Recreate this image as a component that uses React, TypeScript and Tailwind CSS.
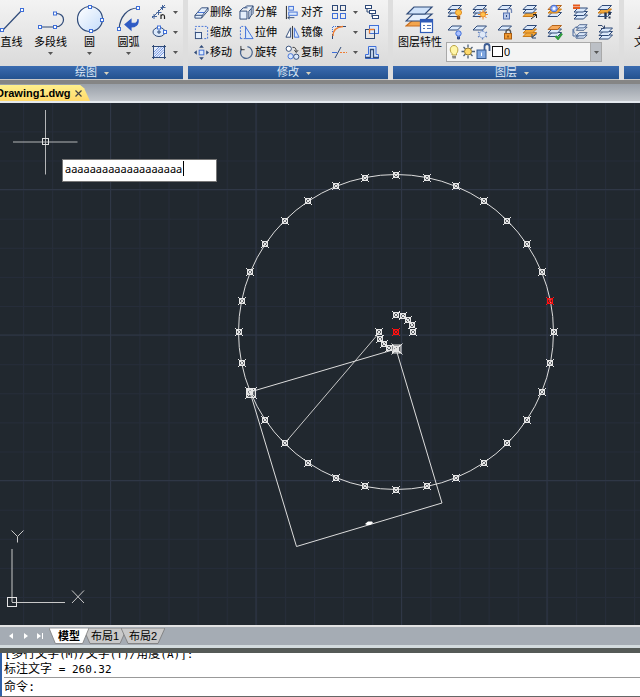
import React from 'react';

const NAVY = '#2f4a78';
const BLUE = '#3f6fd8';
const PALE = '#dbe9fb';
const ORANGE = '#f2a83a';

function Handle({ x, y }: { x: number; y: number }) {
  return <rect x={x - 1.5} y={y - 1.5} width="3" height="3" fill="#fff" stroke={BLUE} strokeWidth="1" />;
}

function Caret({ className = 'text-[#555]' }: { className?: string }) {
  return (
    <svg width="5" height="3" viewBox="0 0 5 3" className={className} aria-hidden="true">
      <path d="M0 0H5L2.5 3Z" fill="currentColor" />
    </svg>
  );
}

function Icon({ children, size = 16 }: { children: React.ReactNode; size?: number }) {
  return (
    <svg width={size} height={size} viewBox="0 0 16 16" fill="none" stroke={NAVY} strokeWidth="1" className="shrink-0" aria-hidden="true">
      {children}
    </svg>
  );
}

function Panel({ title, className, children }: { title: string; className: string; children: React.ReactNode }) {
  return (
    <section className={`flex h-[80px] shrink-0 flex-col overflow-hidden border-b border-[#c8c8c8] bg-linear-to-b from-[#f3f3f3] to-[#d6d6d6] ${className}`}>
      <div className="h-[66px]">{children}</div>
      <button className="flex h-[13px] w-full items-center justify-center bg-linear-to-b from-[#3a6bb0] to-[#23528f] text-[11px] leading-[13px] text-[#dfe9f6]">
        <span className="relative">
          {title}
          {title && (
            <svg width="5" height="3" viewBox="0 0 5 3" className="absolute top-[6px] left-[29px]" aria-hidden="true">
              <path d="M0 0H5L2.5 3Z" fill="#d8d2bc" />
            </svg>
          )}
        </span>
      </button>
    </section>
  );
}

function BigTool({ label, icon, menu, className }: { label: string; icon: React.ReactNode; menu?: boolean; className: string }) {
  return (
    <button className={`flex flex-col items-center pt-1 ${className}`}>
      <svg width="30" height="30" viewBox="0 0 30 30" fill="none" stroke={NAVY} strokeWidth="1.2" aria-hidden="true">
        {icon}
      </svg>
      <span className="text-[11px] leading-4 whitespace-nowrap">{label}</span>
      {menu && <span className="flex h-[7px] items-center"><Caret /></span>}
    </button>
  );
}

function Tool({ label, children }: { label: string; children: React.ReactNode }) {
  return (
    <button className="flex h-5 items-center gap-px">
      <Icon size={15}>{children}</Icon>
      <span className="text-[11px] leading-4 whitespace-nowrap">{label}</span>
    </button>
  );
}

function MenuTool({ label, children }: { label: string; children: React.ReactNode }) {
  return (
    <button aria-label={label} className="flex h-5 items-center gap-[6px]">
      <Icon>{children}</Icon>
      <Caret />
    </button>
  );
}

function Sheet({ y, fill = PALE, stroke = NAVY }: { y: number; fill?: string; stroke?: string }) {
  return <polygon points={`5,${y} 14.5,${y} 10.5,${y + 4} 1,${y + 4}`} fill={fill} stroke={stroke} />;
}

function Stack({ top = PALE, mid = PALE, low = PALE }: { top?: string; mid?: string; low?: string }) {
  return (
    <>
      <Sheet y={8.5} fill={low} stroke={low === ORANGE ? '#c87a18' : NAVY} />
      <Sheet y={5} fill={mid} stroke={mid === ORANGE ? '#c87a18' : NAVY} />
      <Sheet y={1.5} fill={top} stroke={top === PALE ? NAVY : '#b5651d'} />
    </>
  );
}

const layerTools: { label: string; art: React.ReactNode }[] = [
  {
    label: '关闭其他图层',
    art: <><Stack /><circle cx="11.5" cy="8.5" r="3" fill="#ffc247" stroke="#e38a1d" /><path d="M10.3 12v3h2.4v-3" fill="#b06a20" stroke="#8a4c12" /></>,
  },
  {
    label: '冻结其他图层',
    art: <><Stack /><path d="M11 5.5v10M6 10.5h10M7.5 7l7 7M14.5 7l-7 7" stroke="#ee8a2a" /><circle cx="11" cy="10.5" r="2.5" fill="#ffc34d" stroke="#ee8a2a" /></>,
  },
  {
    label: '解锁图层',
    art: <><Sheet y={1.5} /><rect x="6.5" y="9" width="6" height="6" fill="#b9c9ea" stroke="#5370b0" /><path d="M10.5 9V6.5a2 2 0 0 1 4 0V9" stroke="#7186b4" strokeWidth="1.3" /><path d="M9.5 11v2" /></>,
  },
  {
    label: '置为当前',
    art: <><Stack low={ORANGE} /><path d="M9 15l5-4M11 10.5h3.5V14" stroke="#222" /></>,
  },
  {
    label: '匹配图层',
    art: <><Stack mid={ORANGE} top="#f3c69c" /><circle cx="7" cy="4.5" r="3.3" fill="#9cb6ff" stroke={BLUE} /><circle cx="7" cy="4.5" r="1" fill="#fff" stroke="#fff" /></>,
  },
  {
    label: '上一个图层',
    art: <><g transform="translate(1 2)"><Sheet y={9} /><Sheet y={5.5} /><Sheet y={2} /></g><path d="M1 1.5h7M1 4h7" stroke="#e5591c" strokeWidth="1.8" /></>,
  },
  {
    label: '图层漫游',
    art: <><Stack mid={ORANGE} /><path d="M8.5 8.5v3.5M12.5 7.5v3.5" stroke="#26344f" strokeWidth="2.4" /><path d="M8.5 13v2M12.5 12.5v2" stroke="#26344f" strokeWidth="2" /></>,
  },
  {
    label: '关闭图层',
    art: <><Sheet y={2} /><circle cx="11.5" cy="9.5" r="2.7" fill="#a8bfff" stroke={BLUE} /><path d="M10.5 12.5v2.5h2v-2.5" fill="#3b5cab" stroke="#2e488a" /></>,
  },
  {
    label: '冻结图层',
    art: <><Sheet y={2} /><path d="M10.5 5.5v10M6 8l9 5M15 8l-9 5" stroke="#5c7dbb" strokeWidth="1.3" /><circle cx="10.5" cy="10.5" r="3.3" stroke="#7d98cb" strokeDasharray="2 1" fill="#dfe9f8" /></>,
  },
  {
    label: '锁定图层',
    art: <><Sheet y={2} /><path d="M9 10V8a2.3 2.3 0 0 1 4.6 0v2" stroke="#555" strokeWidth="1.4" /><rect x="7.5" y="9.5" width="7" height="5.5" fill="#f29a31" stroke="#a85d12" /><path d="M11 11.5v2" stroke="#5c2e06" /></>,
  },
  {
    label: '更改为当前图层',
    art: <><Stack low={ORANGE} mid={ORANGE} /><path d="M15 9.5l-5 4M10 10v4h4" stroke="#26446e" /></>,
  },
  {
    label: '图层状态',
    art: <><Stack top="#f5a95b" /><path d="M8.5 12l2.5 2.8L15 9.5" stroke="#2e9a3c" strokeWidth="2.2" /></>,
  },
  {
    label: '隔离图层',
    art: <><g transform="translate(3.5 -.5) scale(.8)"><Sheet y={4.5} /><Sheet y={1.5} /></g><g transform="translate(3.5 7) scale(.8)"><Sheet y={5} /><Sheet y={2} /></g><path d="M5 3C1 3 1 8 3 9.5M1 5v7h4M3.5 10.5l2 1.500-2 1.500" stroke="#48689c" /></>,
  },
  {
    label: '合并图层',
    art: <><g transform="translate(1 2)"><Sheet y={9} /><Sheet y={5.5} /><Sheet y={2} /></g><path d="M1 1.5h4l2 2.500M4 4.500h3.500V1.500" stroke="#34496f" /></>,
  },
];

function DrawPanel() {
  return (
    <Panel title="绘图" className="-ml-[11px] w-[194px]">
      <div className="flex pl-[3px]">
        <BigTool label="直线" className="w-[39px]" icon={<><path d="M5 27L25 6" /><Handle x={5} y={26} /><Handle x={25} y={6} /></>} />
        <BigTool label="多段线" menu className="w-[39px]" icon={<><path d="M4 23H20C30 22 30 9 20 9.5" /><Handle x={4} y={23} /><Handle x={19} y={23} /><Handle x={19} y={9.5} /></>} />
        <BigTool
          label="圆"
          menu
          className="w-[39px]"
          icon={
            <>
              <defs>
                <linearGradient id="disc" x1="0" y1="0" x2="1" y2="1">
                  <stop offset="0" stopColor="#fff" />
                  <stop offset="1" stopColor="#c4dcfa" />
                </linearGradient>
              </defs>
              <circle cx="15" cy="15" r="12.5" fill="url(#disc)" />
              <Handle x={15} y={3} /><Handle x={27} y={16} /><Handle x={16} y={27} />
            </>
          }
        />
        <BigTool label="圆弧" menu className="w-[39px]" icon={<><path d="M5 25C6 13 13 4 24 4" /><path d="M24 15C24 20 21 19.500 17 19V15.500L11 20.500L17 26V23C21 23 25 21 24 15Z" fill="#2f5bc4" stroke="#2f5bc4" /><Handle x={5} y={25} /><Handle x={24} y={4} /></>} />
        <div className="ml-[3px] flex flex-col pt-[2px]">
          <MenuTool label="多点"><path d="M1 14L14 1M3 10v5M1 12.5h5M7.5 6v5M5.5 8.5h5M11.5 1v5M9.5 3.5h5" stroke="#45659b" /><path d="M10 15v-4.5M10 12c1-2 3.5-1.5 3.5.5V15" stroke="#222" strokeWidth="1.2" /></MenuTool>
          <MenuTool label="椭圆"><ellipse cx="8" cy="8" rx="6" ry="4.5" fill={PALE} /><path d="M8 6v4M6 8h4" /><Handle x={14} y={8} /><Handle x={8} y={3.5} /></MenuTool>
          <MenuTool label="图案填充"><rect x="2.5" y="2.5" width="11" height="11" fill="#e8effb" /><path d="M3 8l5-5M3 13L13 3M8 13l5-5M3 10.5L10.5 3M5.5 13L13 5.5" stroke={BLUE} strokeWidth=".7" /><path d="M1 2.5h2M13 2.5h2M1 13.5h2M13 13.5h2M2.5 1v2M13.5 1v2M2.5 13v2M13.5 13v2" /></MenuTool>
        </div>
      </div>
    </Panel>
  );
}

function ModifyPanel() {
  return (
    <Panel title="修改" className="w-[200px]">
      <div className="grid grid-cols-[45px_46px_46px_33px_16px] pt-[2px] pl-[6px]">
        <Tool label="删除"><path d="M1 11L8 3H15L9 11ZM1 11V14H8L9 11M8 14L15 6V3" fill="#e4eefb" /><path d="M4 8h7" stroke={BLUE} /></Tool>
        <Tool label="分解"><path d="M1 6.5H8.5V15H1ZM1 6.5L4.5 3H9M10.5 6.5V15L13 11V4ZM6 3L8 1H15L13 4M15 1V9L13 11" fill="#e4eefb" /></Tool>
        <Tool label="对齐"><path d="M1.5 1V15" stroke="#222" /><rect x="4" y="1.5" width="5" height="4" fill={PALE} stroke={BLUE} /><rect x="4" y="7.5" width="9" height="3.5" fill={PALE} stroke={BLUE} /><path d="M3 13.5h7M5 12l-2 1.5L5 15" /></Tool>
        <MenuTool label="阵列"><rect x="1.5" y="1.5" width="5" height="5" /><rect x="9.5" y="1.5" width="5" height="5" /><rect x="1.5" y="9.5" width="5" height="5" stroke={BLUE} /><rect x="9.5" y="9.5" width="5" height="5" stroke={BLUE} /></MenuTool>
        <button aria-label="打断" className="flex h-5 items-center"><Icon><rect x="1.5" y="1.5" width="6" height="3" fill="#fff" /><rect x="5.5" y="6.5" width="6" height="3" fill="#fff" /><rect x="8.5" y="11.5" width="6" height="3" fill="#fff" /><path d="M3 4.5V8H5.5M8 9.5V13" /></Icon></button>

        <Tool label="缩放"><path d="M1.5 9V1.5H14.5V14.5H9" strokeDasharray="2 1.5" stroke={BLUE} /><rect x="1.5" y="8" width="6.5" height="6.5" fill="#e4eefb" /></Tool>
        <Tool label="拉伸"><path d="M1.5 14.5V1.5H7V14.5Z" strokeDasharray="2 1.5" stroke={BLUE} /><path d="M7 2V14.5H15Z" fill={PALE} stroke={BLUE} /></Tool>
        <Tool label="镜像"><path d="M6 3V13H1Z" fill="#fff" /><path d="M10 3V13H15Z" fill={PALE} stroke={BLUE} /><path d="M8 1V15" stroke="#333" /></Tool>
        <MenuTool label="圆角"><path d="M1.5 15V10M6 2.5H15" stroke={NAVY} /><path d="M2 12C2 6 6 3 12 2.5" stroke="#ef7d32" strokeWidth="1.3" /><path d="M1.5 8V2.5H5" stroke={BLUE} strokeDasharray="1 1" /></MenuTool>
        <button aria-label="合并" className="flex h-5 items-center"><Icon><rect x="5.5" y="1.5" width="9" height="8" fill={PALE} stroke={BLUE} /><rect x="1.5" y="5.5" width="9" height="9" /><path d="M5.5 9.5V5.5H10.5" stroke="#ef7d32" strokeWidth="1.3" /></Icon></button>

        <Tool label="移动"><rect x="5.5" y="5.5" width="5" height="5" fill={PALE} stroke={BLUE} /><path d="M8 0L10.5 3H5.5ZM8 16L5.5 13H10.5ZM0 8L3 5.5V10.5ZM16 8L13 10.5V5.5Z" fill={NAVY} stroke="none" /></Tool>
        <Tool label="旋转"><path d="M3 4A6.3 6.3 0 1 0 9 1.8" stroke="#49658f" strokeWidth="1.3" /><path d="M2 1V5H6" stroke="#333" /></Tool>
        <Tool label="复制"><circle cx="4" cy="4" r="2.8" fill="#fff" /><circle cx="6" cy="12" r="2.8" fill={PALE} stroke={BLUE} /><circle cx="12" cy="12.5" r="2.8" fill={PALE} /><path d="M8 2.5C11 2 12 4 12 7M10 5.5L12 8l2-2.5" stroke="#333" /></Tool>
        <MenuTool label="修剪"><path d="M1 8.5H6" stroke={BLUE} /><path d="M4 14L10 3" /><path d="M9 8.5H16" stroke="#ef7d32" strokeDasharray="2 1" /></MenuTool>
        <button aria-label="偏移" className="flex h-5 items-center"><Icon><path d="M1.5 14.5V10.5H4.500V2.500H12V10.500H14.500V14.500Z" fill={PALE} stroke={BLUE} /><path d="M1 13.500H6.500V5.500H9.500V13.500H15" strokeWidth="1.3" /></Icon></button>
      </div>
    </Panel>
  );
}

function LayerPanel() {
  return (
    <Panel title="图层" className="w-[226px]">
      <div className="flex">
        <BigTool
          label="图层特性"
          className="w-[54px]"
          icon={
            <>
              <path d="M8 16H26L18 22H1Z" fill="#f3a54c" stroke="#c96f1e" />
              <path d="M8 10H27L19 17H1Z" fill="#e4effd" />
              <path d="M9 3H27L20 10H2Z" fill="#cfe2fa" />
              <rect x="15.5" y="15.5" width="12" height="13" fill="#fff" stroke="#2f5bb8" />
              <path d="M15 17H28" stroke="#2f5bb8" strokeWidth="3" />
              <path d="M18 21.5h2M22 21.5h4M18 24.5h2M22 24.5h4" stroke="#5577b5" />
            </>
          }
        />
        <div>
          <div className="grid grid-cols-[repeat(7,16px)] gap-x-[9px] pt-[2px]">
            {layerTools.map((t) => (
              <button key={t.label} aria-label={t.label} className="flex h-5 items-center">
                <Icon>{t.art}</Icon>
              </button>
            ))}
          </div>
          <div className="-ml-px flex h-[20px] w-[156px] items-center border border-[#a9a9a9] bg-[#f4f4f4]">
            <svg width="57" height="18" viewBox="0 0 57 18" fill="none" className="shrink-0" aria-hidden="true">
              <path d="M5 10.5C2 8 3 2.5 7 2.5S12 8 9.5 10.5V12H5Z" fill="#fff6a8" stroke="#b8a040" />
              <path d="M5 13h4v2.5H5.5Z" fill="#8a8a8a" />
              <path d="M21 1.5v3M21 12.500v3M14.5 8.5h3M25 8.5h3M16.5 4l2 2M25.5 4l-2 2M16.5 13l2-2M25.5 13l-2-2" stroke="#4d6077" strokeWidth="1.3" />
              <circle cx="21" cy="8.5" r="3.5" fill="#ffd96a" stroke="#967b30" />
              <path d="M37.5 8V3.5a2.5 2.5 0 0 1 5 0V8" stroke="#3c5b91" strokeWidth="1.8" />
              <rect x="30" y="7" width="9" height="8.5" fill="#7fa6df" stroke="#35598f" />
              <path d="M34.5 9.5v3.5" stroke="#fff" />
              <rect x="45.5" y="3.5" width="10" height="10" fill="#fff" stroke="#111" />
            </svg>
            <select aria-label="当前图层" className="h-full min-w-0 flex-1 appearance-none bg-transparent text-[11px] leading-4 outline-none" defaultValue="0">
              <option value="0">0</option>
            </select>
            <span className="pointer-events-none flex h-full w-[11px] shrink-0 items-center justify-center border-l border-[#aaa] bg-[#bcc0c6]">
              <Caret />
            </span>
          </div>
        </div>
      </div>
    </Panel>
  );
}

function TextPanel() {
  return (
    <Panel title="" className="min-w-[17px] flex-1">
      <button className="flex flex-col pt-[10px] pl-[10px] text-[11px] leading-4">
        <span className="h-[24px] font-['Liberation_Serif',serif] text-[22px] leading-[24px] text-[#26344f] italic">A</span>
        <span className="whitespace-nowrap">文字</span>
      </button>
    </Panel>
  );
}

const CX = 396;
const CY = 332;
const R = 157.5;

function Marker({ x, y, color = '#e6e6e6', s = 4 }: { x: number; y: number; color?: string; s?: number }) {
  const q = s - 1.5;
  return (
    <g stroke={color} strokeWidth="1" fill="none">
      <path d={`M${x - s} ${y - s}L${x + s} ${y + s}M${x + s} ${y - s}L${x - s} ${y + s}`} />
      <rect x={x - q} y={y - q} width={q * 2} height={q * 2} fill={color} fillOpacity=".3" />
    </g>
  );
}

function ring(r: number, from: number, to: number, step: number) {
  const out: { x: number; y: number; a: number }[] = [];
  for (let a = from; a <= to; a += step) {
    const t = (a * Math.PI) / 180;
    out.push({ x: Math.round(CX + r * Math.cos(t)), y: Math.round(CY - r * Math.sin(t)), a });
  }
  return out;
}

function Drawing() {
  const outer = ring(R, 0, 359, 11.25);
  const inner = [...ring(17, 0, 90, 22.5), ...ring(17, 180, 270, 22.5)];
  return (
    <svg width="100%" height="100%" className="absolute inset-0" aria-label="模型空间">
      <defs>
        <pattern id="minor" width="29.1" height="29.1" x="23" y="57.5" patternUnits="userSpaceOnUse">
          <path d="M0 .5H29.1M.5 0V29.1" stroke="#262d3a" fill="none" />
        </pattern>
        <pattern id="major" width="145.5" height="145.5" x="110" y="86" patternUnits="userSpaceOnUse">
          <path d="M0 .5H145.5M.5 0V145.5" stroke="#2f3746" fill="none" />
        </pattern>
      </defs>
      <rect width="100%" height="100%" fill="url(#minor)" />
      <rect width="100%" height="100%" fill="url(#major)" />
      <g transform="translate(0 -103)" fill="none">
        <circle cx={CX} cy={CY} r={R} stroke="#dcdcdc" />
        <path d="M379 333L285 443" stroke="#c8c8c8" />
        <path d="M396 349L250 392L296.5 546.5L442 503L396 349" stroke="#dcdcdc" />
        {outer.map((p) => (
          <Marker key={p.a} x={p.x} y={p.y} color={p.a === 11.25 ? '#ff1010' : undefined} />
        ))}
        {inner.map((p) => (
          <Marker key={p.a} x={p.x} y={p.y} />
        ))}
        <Marker x={396} y={332} color="#ff1010" />
        <Marker x={397} y={349} s={5.5} />
        <Marker x={251} y={393} s={6} />
        <path d="M365 524l3-2.500h4l1 1.500-3 2h-3z" fill="#fff" />
        <path d="M13 142H77.5M45.5 110V174.5" stroke="#b4b6b8" />
        <rect x="42.5" y="138.5" width="6" height="6" stroke="#e0e0e0" />
      </g>
    </svg>
  );
}

function AxisMark() {
  return (
    <svg width="90" height="100" viewBox="0 0 90 100" fill="none" stroke="#c8c8c8" className="absolute bottom-0 left-0" aria-hidden="true">
      <path d="M12 24V77M12 77.5H65" />
      <rect x="7.5" y="72.5" width="9" height="9" stroke="#e4e4e4" />
      <path d="M11.5 5.5L17.5 11.5L23.5 5.5M17.5 11.5V17.5M72 65.5L84 78M84 65.5L72 78" />
    </svg>
  );
}

function SheetTab({ label, active, className }: { label: string; active?: boolean; className: string }) {
  return (
    <button className={`relative -ml-[6px] h-[16px] text-[11px] leading-4 ${active ? 'z-10 font-bold' : ''} ${className}`}>
      <svg width="100%" height="100%" viewBox="0 0 44 16" preserveAspectRatio="none" className="absolute inset-0" aria-hidden="true">
        <path d="M0 0H44L37 15.5H7Z" fill={active ? '#fff' : '#c9c9c9'} stroke="#777" strokeWidth=".8" />
      </svg>
      <span className="relative whitespace-nowrap">{label}</span>
    </button>
  );
}

export default function App() {
  return (
    <div className="flex min-h-screen flex-col overflow-hidden bg-[#d0d0d0] font-['Liberation_Sans','Noto_Sans_CJK_SC',sans-serif] text-black">
      <header className="flex gap-[5px] overflow-hidden border-b-4 border-[#858585] bg-[#dedede]">
        <DrawPanel />
        <ModifyPanel />
        <LayerPanel />
        <TextPanel />
      </header>

      <nav className="flex h-[19px] items-end border-b-2 border-[#e4e9ee] bg-linear-to-b from-[#989fa8] to-[#c3c7cc]">
        <div className="-ml-2 flex h-[16px] w-[98px] items-center justify-between bg-linear-to-b from-[#fff08c] to-[#ffd96b] pr-[8px] pl-[4px] [clip-path:polygon(0_0,90%_0,94%_20%,100%_100%,0_100%)]">
          <button className="text-[11px] leading-4 font-bold whitespace-nowrap">Drawing1.dwg</button>
          <button aria-label="关闭">
            <svg width="7" height="7" viewBox="0 0 7 7" stroke="#444" strokeWidth="1.2" aria-hidden="true"><path d="M.5 .5L6.5 6.5M6.5 .5L.5 6.5" /></svg>
          </button>
        </div>
      </nav>

      <main className="relative min-h-[300px] flex-1 overflow-hidden bg-[#21282f]">
        <Drawing />
        <AxisMark />
        <div className="absolute top-[56px] left-[62px] flex h-[23px] w-[155px] border border-[#777] bg-white">
          <input aria-label="文字输入" defaultValue="aaaaaaaaaaaaaaaaaaa" className="w-full bg-transparent px-[2px] pb-[3px] font-['Noto_Sans',sans-serif] text-[11px] leading-4 outline-none" />
          <span className="absolute top-px left-[120px] h-[15px] w-px bg-black" />
        </div>
      </main>

      <nav className="flex h-[23px] items-start border-t-2 border-b-3 border-t-[#e2e2e2] border-b-[#d3dbde] bg-[#a5acb4] pt-px">
        <svg width="49" height="16" viewBox="0 0 49 16" fill="#fff" className="shrink-0" aria-hidden="true">
          <path d="M13 5V11L9 8ZM24 5V11L28 8ZM37 5V11L41 8ZM42 5H43V11H42Z" />
        </svg>
        <div className="flex pl-[6px]">
          <SheetTab label="模型" active className="w-[40px]" />
          <SheetTab label="布局1" className="w-[44px]" />
          <SheetTab label="布局2" className="w-[44px]" />
        </div>
      </nav>

      <footer className="border-t-5 border-b border-t-[#555a57] border-b-[#666] bg-white font-['DejaVu_Sans_Mono','Noto_Sans_CJK_SC',monospace] text-[12px]">
        <div className="border-l-2 border-[#3060a8] pl-[2px]">
          <div className="flex h-[25px] flex-col justify-end overflow-hidden border-b border-[#999] leading-[15px]">
            <p className="whitespace-nowrap">[多行文字<span className="text-[11px]">(M)/</span>文字<span className="text-[11px]">(T)/</span>角度<span className="text-[11px]">(A)]:</span></p>
            <p className="whitespace-nowrap">标注文字<span className="text-[11px]"> = 260.32</span></p>
          </div>
          <label className="flex h-[18px] items-center leading-4">
            命令:
            <input className="min-w-0 flex-1 bg-transparent outline-none" />
          </label>
        </div>
      </footer>
    </div>
  );
}
